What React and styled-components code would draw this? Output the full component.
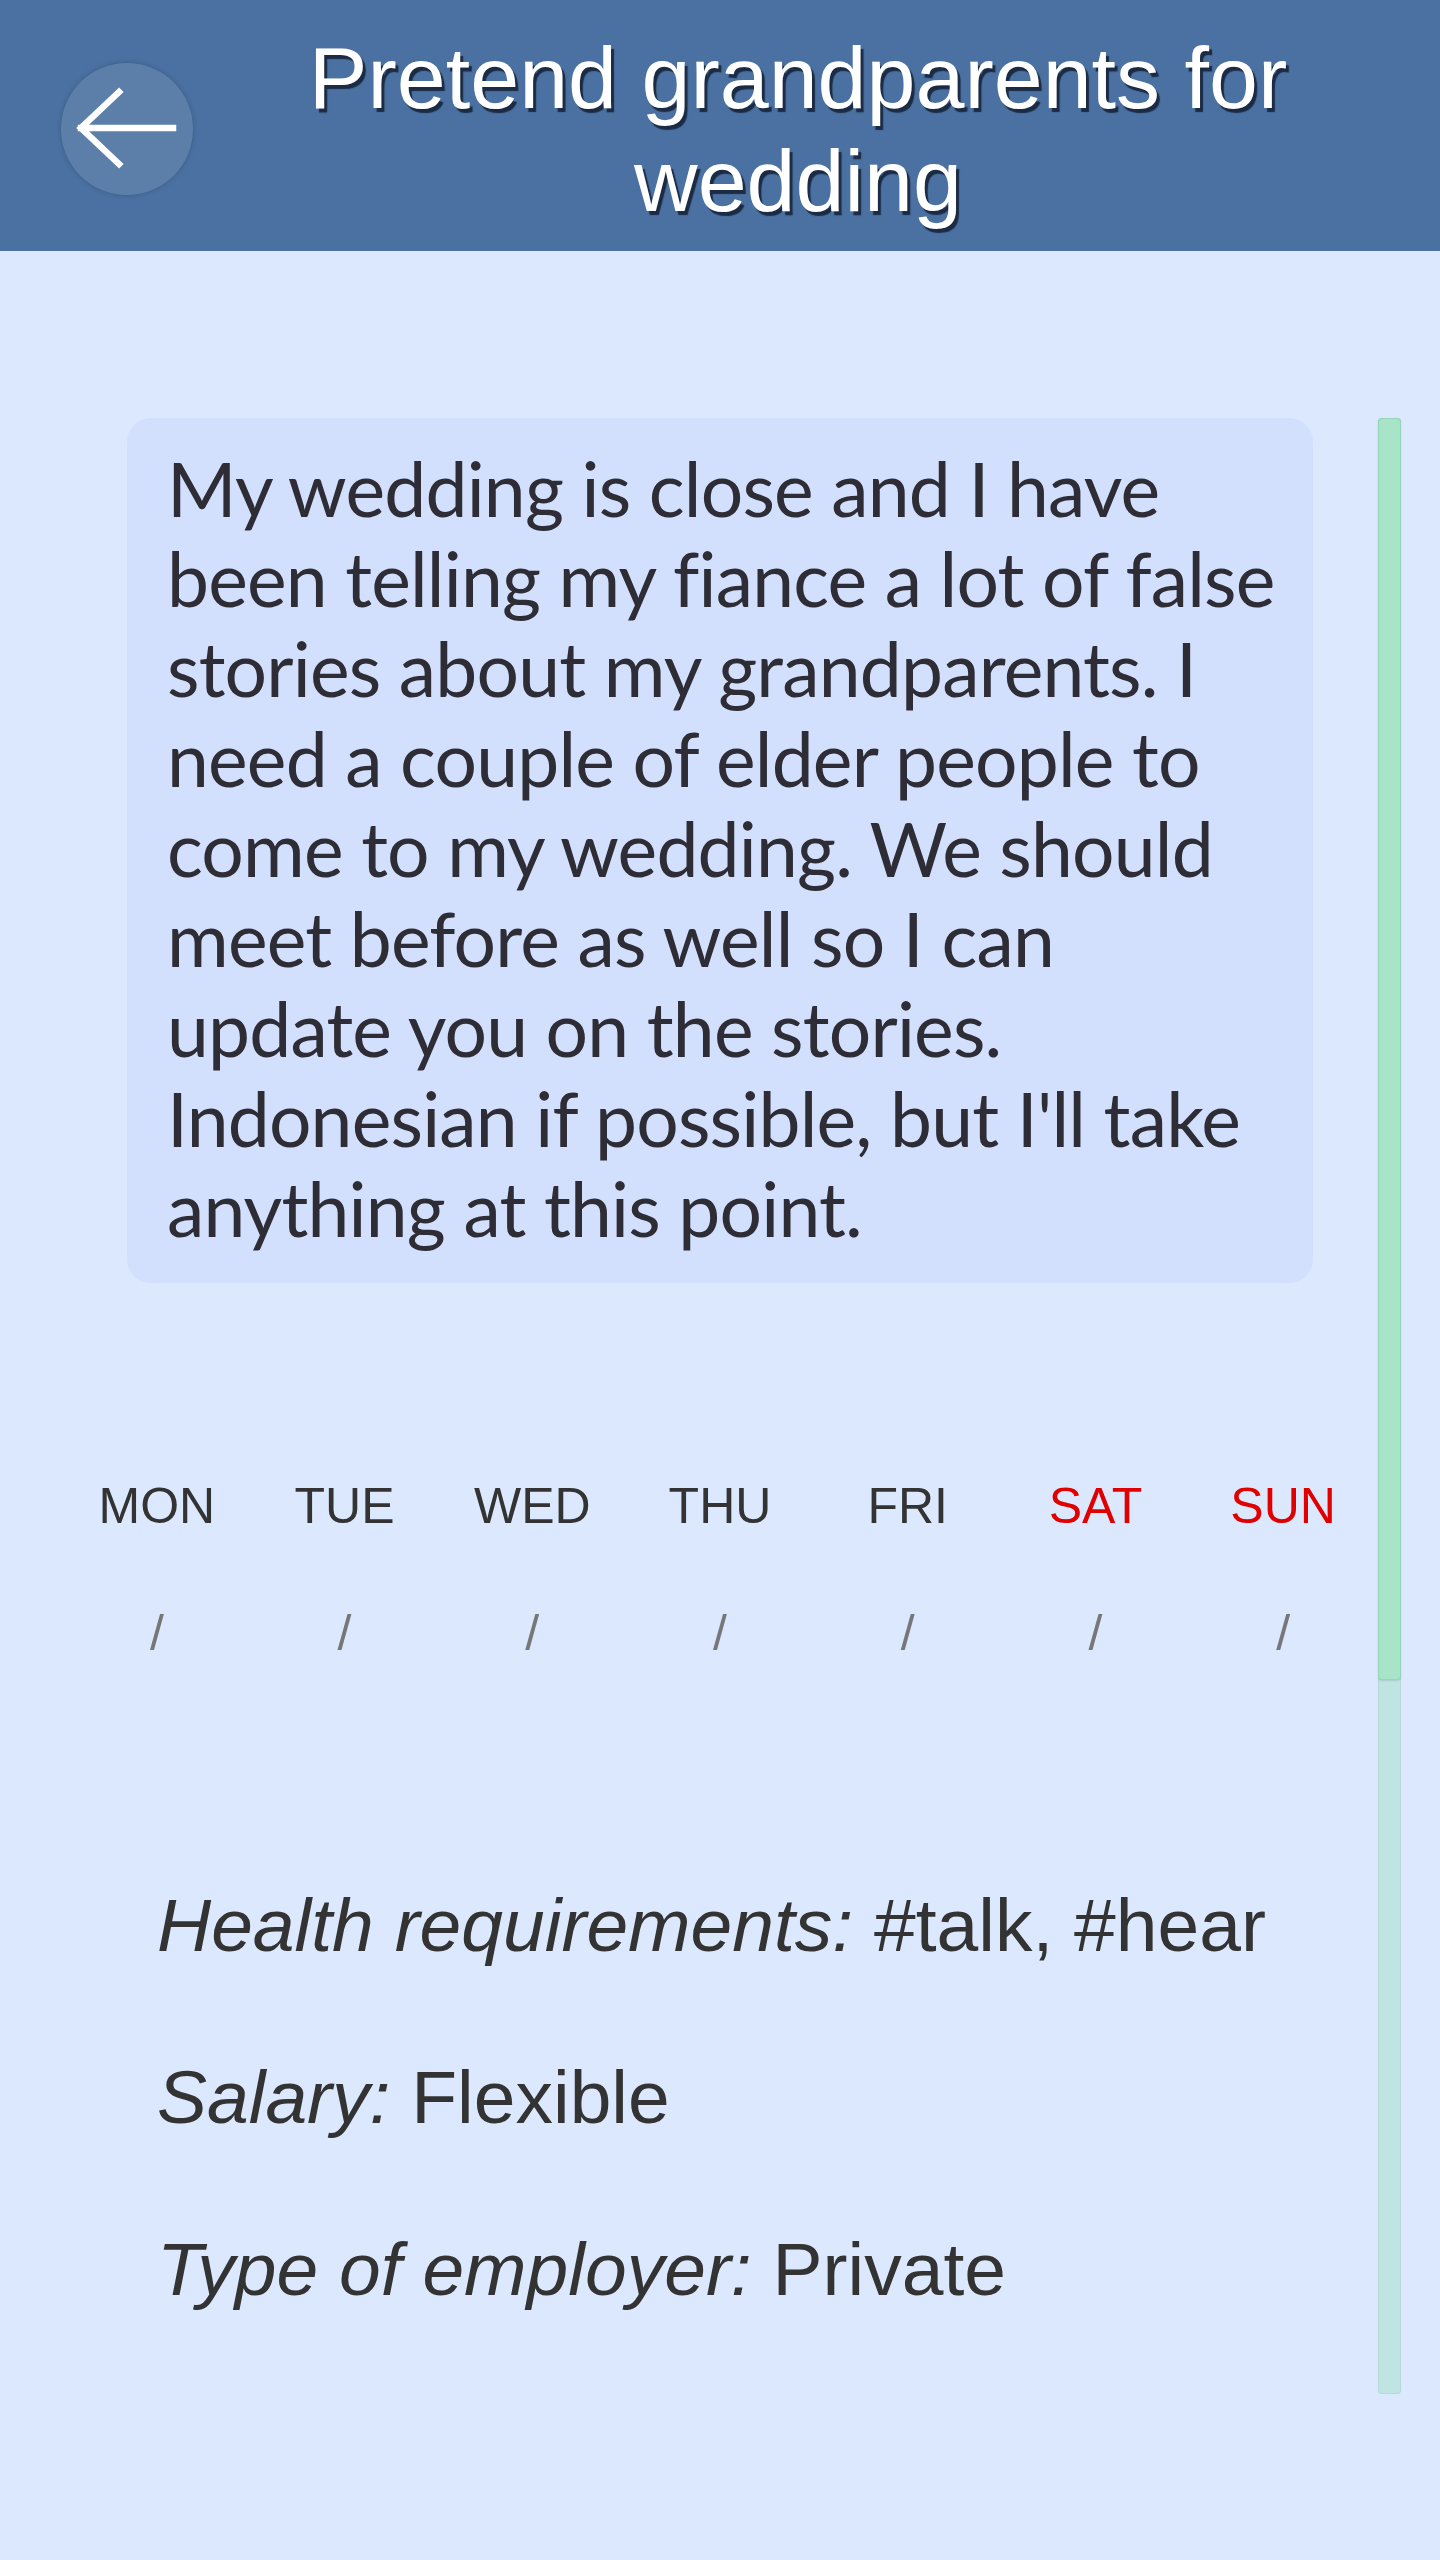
import React from "react";
import styled, { createGlobalStyle } from "styled-components";

const GlobalStyle = createGlobalStyle`
  html, body {
    margin: 0;
    padding: 0;
    background: #dce8fe;
  }
  body {
    font-family: "Liberation Sans", Arial, sans-serif;
  }
  * { box-sizing: border-box; }
`;

const Page = styled.div`
  min-height: 2560px;
  background: #dce8fe;
`;

const Header = styled.header`
  display: flex;
  align-items: flex-start;
  height: 251px;
  padding: 26px 37px 19px 61px;
  background: #4a71a1;
`;

const BackButton = styled.button`
  align-self: center;
  flex: 0 0 auto;
  width: 132px;
  height: 132px;
  padding: 0;
  border: none;
  border-radius: 50%;
  background: rgba(255, 255, 255, 0.1);
  box-shadow: 0 0 5px rgba(25, 45, 75, 0.3);
  display: flex;
  align-items: center;
  justify-content: center;
  cursor: pointer;
`;

const Title = styled.h1`
  flex: 1;
  margin: 0;
  text-align: center;
  font-family: "Liberation Sans", Arial, sans-serif;
  font-weight: 400;
  font-size: 88px;
  line-height: 103px;
  color: #ffffff;
  text-shadow: 3px 4px 1px rgba(22, 36, 58, 0.9);
`;

const Main = styled.main`
  display: flex;
  align-items: flex-start;
  gap: 1px;
  padding: 167px 39px 0 63px;
`;

const Content = styled.div`
  flex: 1;
  min-width: 0;
  display: flex;
  flex-direction: column;
`;

const Description = styled.p`
  margin: 0 64px;
  padding: 25px 35px 30px 40px;
  border-radius: 24px;
  background: #d2dffd;
  font-family: Lato, "Noto Sans", sans-serif;
  font-size: 75px;
  line-height: 90px;
  letter-spacing: -0.8px;
  font-variant-ligatures: none;
  color: #2e2d36;
`;

const Week = styled.div`
  display: grid;
  grid-template-columns: repeat(7, 1fr);
  margin-top: 194px;
`;

const DayColumn = styled.div`
  display: flex;
  flex-direction: column;
  align-items: center;
  gap: 69px;
`;

const DayName = styled.span`
  font-family: "Liberation Sans", Arial, sans-serif;
  font-size: 50px;
  line-height: 58px;
  color: ${(p) => (p.$weekend ? "#e00000" : "#333333")};
`;

const DaySlot = styled.span`
  font-family: "Liberation Sans", Arial, sans-serif;
  font-size: 50px;
  line-height: 58px;
  color: #777777;
`;

const Attributes = styled.div`
  display: flex;
  flex-direction: column;
  gap: 86px;
  margin-top: 220px;
  padding-left: 94px;
`;

const Attribute = styled.div`
  font-family: "Liberation Sans", Arial, sans-serif;
  font-size: 75px;
  line-height: 86px;
  color: #333333;
  white-space: nowrap;
`;

const Label = styled.em`
  font-style: italic;
`;

const Scrollbar = styled.div`
  flex: 0 0 23px;
  width: 23px;
  height: 1976px;
  border-radius: 4px;
  background: #c0e4e2;
  box-shadow: inset 0 0 0 1px rgba(120, 170, 170, 0.18);
  display: flex;
  flex-direction: column;
`;

const Thumb = styled.div`
  height: 1262px;
  border-radius: 4px;
  background: #a8e4c8;
  box-shadow: inset 0 0 0 1px rgba(90, 170, 130, 0.25), 0 1px 2px rgba(60, 120, 100, 0.2);
`;

const days = [
  { name: "MON" },
  { name: "TUE" },
  { name: "WED" },
  { name: "THU" },
  { name: "FRI" },
  { name: "SAT", weekend: true },
  { name: "SUN", weekend: true },
];

const attributes = [
  { label: "Health requirements:", value: "#talk, #hear" },
  { label: "Salary:", value: "Flexible" },
  { label: "Type of employer:", value: "Private" },
];

function ArrowIcon() {
  return (
    <svg width="132" height="132" viewBox="0 0 132 132" fill="none">
      <path
        d="M20 65 H112 M58 29 L20 65 L58 101"
        stroke="#ffffff"
        strokeWidth="6.5"
        strokeLinecap="square"
        strokeLinejoin="miter"
      />
    </svg>
  );
}

export default function App() {
  return (
    <Page>
      <GlobalStyle />
      <Header>
        <BackButton aria-label="Back">
          <ArrowIcon />
        </BackButton>
        <Title>Pretend grandparents for wedding</Title>
      </Header>
      <Main>
        <Content>
          <Description>
            My wedding is close and I have been telling my fiance a lot of false
            stories about my grandparents. I need a couple of elder people to come
            to my wedding. We should meet before as well so I can update you on the
            stories. Indonesian if possible, but I'll take anything at this point.
          </Description>
          <Week>
            {days.map((d) => (
              <DayColumn key={d.name}>
                <DayName $weekend={d.weekend}>{d.name}</DayName>
                <DaySlot>/</DaySlot>
              </DayColumn>
            ))}
          </Week>
          <Attributes>
            {attributes.map((a) => (
              <Attribute key={a.label}>
                <Label>{a.label}</Label> {a.value}
              </Attribute>
            ))}
          </Attributes>
        </Content>
        <Scrollbar>
          <Thumb />
        </Scrollbar>
      </Main>
    </Page>
  );
}
